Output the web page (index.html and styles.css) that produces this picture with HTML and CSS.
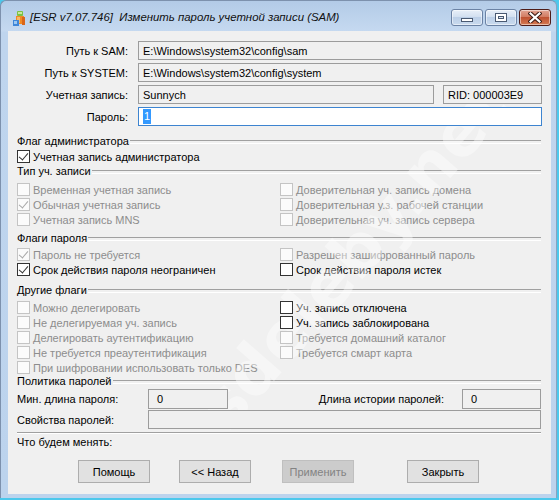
FILE: index.html
```html
<!DOCTYPE html>
<html>
<head>
<meta charset="utf-8">
<title>ESR</title>
<link rel="stylesheet" href="styles.css">
</head>
<body>
<div class="window">
  <div class="titlebar">
    <svg class="appicon" width="16" height="17" viewBox="0 0 16 17">
      <rect x="5" y="1" width="6" height="5" rx="1" fill="#7cc242"/>
      <rect x="6" y="2" width="4" height="2" fill="#c8e89a"/>
      <path d="M4 6 h8 v8 h-8 z" fill="#f08a24"/>
      <path d="M5 7 h3 v6 h-3 z" fill="#f7b866"/>
      <path d="M1 10 h6 v6 h-6 z" fill="#3f86d8"/>
      <path d="M2 11 h3 v3 h-3 z" fill="#9cc8f2"/>
      <rect x="10" y="7" width="3" height="8" fill="#d9661a"/>
    </svg>
    <span class="title">[ESR v7.07.746]&nbsp; Изменить пароль учетной записи (SAM)</span>
    <div class="controls">
      <div class="cbtn"><span class="g-min"></span></div>
      <div class="cbtn"><span class="g-max"></span></div>
      <div class="cbtn close">
        <svg width="14" height="11" viewBox="0 0 14 11">
          <path d="M2.5 1.5 L11.5 9.5 M11.5 1.5 L2.5 9.5" stroke="#3b1a14" stroke-width="4.2" stroke-linecap="square"/>
          <path d="M2.5 1.5 L11.5 9.5 M11.5 1.5 L2.5 9.5" stroke="#ffffff" stroke-width="2.2" stroke-linecap="square"/>
        </svg>
      </div>
    </div>
  </div>

  <div class="client">
    <div class="watermark">sdeleby.net</div>

    <div class="paths">
      <span class="lbl">Путь к SAM:</span>
      <div class="edit wide">E:\Windows\system32\config\sam</div>
      <span class="lbl">Путь к SYSTEM:</span>
      <div class="edit wide">E:\Windows\system32\config\system</div>
      <span class="lbl">Учетная запись:</span>
      <div class="edit">Sunnych</div>
      <div class="edit rid">RID: 000003E9</div>
      <span class="lbl">Пароль:</span>
      <div class="edit wide focus"><span class="sel">1</span></div>
    </div>

    <div class="ghead g1"><span>Флаг администратора</span></div>
    <div class="cbgrid">
      <div class="cb checked"><i></i>Учетная запись администратора</div>
    </div>

    <div class="ghead g2"><span>Тип уч. записи</span></div>
    <div class="cbgrid r2">
      <div class="cb dis"><i></i>Временная учетная запись</div>
      <div class="cb dis"><i></i>Доверительная уч. запись домена</div>
      <div class="cb dis checked"><i></i>Обычная учетная запись</div>
      <div class="cb dis"><i></i>Доверительная у.з. рабочей станции</div>
      <div class="cb dis"><i></i>Учетная запись MNS</div>
      <div class="cb dis"><i></i>Доверительная уч. запись сервера</div>
    </div>

    <div class="ghead g3"><span>Флаги пароля</span></div>
    <div class="cbgrid r3">
      <div class="cb dis checked"><i></i>Пароль не требуется</div>
      <div class="cb dis"><i></i>Разрешен зашифрованный пароль</div>
      <div class="cb checked"><i></i>Срок действия пароля неограничен</div>
      <div class="cb"><i></i>Срок действия пароля истек</div>
    </div>

    <div class="ghead g4"><span>Другие флаги</span></div>
    <div class="cbgrid r4">
      <div class="cb dis"><i></i>Можно делегировать</div>
      <div class="cb"><i></i>Уч. запись отключена</div>
      <div class="cb dis"><i></i>Не делегируемая уч. запись</div>
      <div class="cb"><i></i>Уч. запись заблокирована</div>
      <div class="cb dis"><i></i>Делегировать аутентификацию</div>
      <div class="cb dis"><i></i>Требуется домашний каталог</div>
      <div class="cb dis"><i></i>Не требуется преаутентификация</div>
      <div class="cb dis"><i></i>Требуется смарт карта</div>
      <div class="cb dis"><i></i>При шифровании использовать только DES</div>
    </div>

    <div class="ghead g5"><span>Политика паролей</span></div>
    <div class="policy">
      <span class="plbl">Мин. длина пароля:</span>
      <div class="edit">0</div>
      <span class="plbl right">Длина истории паролей:</span>
      <div class="edit">0</div>
      <span class="plbl">Свойства паролей:</span>
      <div class="edit pwide"></div>
    </div>

    <div class="sep"></div>
    <div class="change">Что будем менять:</div>

    <div class="buttons">
      <div class="btn b1">Помощь</div>
      <div class="btn b2">&lt;&lt; Назад</div>
      <div class="btn b3 disabled">Применить</div>
      <div class="btn b4">Закрыть</div>
    </div>
  </div>
</div>
</body>
</html>
```

FILE: styles.css
```css
* { box-sizing: border-box; }
html, body { margin: 0; padding: 0; }
body {
  width: 559px;
  height: 500px;
  overflow: hidden;
  background: #4cc8ec;
  font-family: "Liberation Sans", Arial, sans-serif;
  font-size: 11px;
  color: #000;
}
.window {
  width: 557px;
  height: 498px;
  background: linear-gradient(#b3cbe7 0px, #c5d9f0 30px, #bfd5ee 31px, #bcd3ed 100%);
  border-top: 1px solid #7d91ad;
  border-left: 1px solid #7d91ad;
  border-right: 1px solid #8aa2c0;
  border-radius: 6px 6px 0 0;
  display: flex;
  flex-direction: column;
}
.titlebar {
  height: 30px;
  display: flex;
  align-items: flex-start;
  padding-left: 11px;
}
.appicon { margin-top: 9px; flex: none; }
.title {
  margin-left: 2px;
  margin-top: 10px;
  font-style: italic;
  font-size: 11.4px;
  color: #101010;
  white-space: nowrap;
}
.controls {
  margin-left: auto;
  margin-right: 5px;
  margin-top: 8px;
  display: flex;
  gap: 2px;
}
.cbtn {
  width: 32px;
  height: 17px;
  border: 1px solid #6b82a4;
  border-radius: 3px;
  background: linear-gradient(#e8eff8 0%, #d3e0f0 45%, #bccfe7 50%, #c9daee 100%);
  display: flex;
  align-items: center;
  justify-content: center;
  box-shadow: inset 0 0 0 1px rgba(255,255,255,0.5);
}
.g-min {
  width: 12px;
  height: 4px;
  margin-top: 5px;
  background: #fff;
  border: 1px solid #4a5a72;
}
.g-max {
  width: 12px;
  height: 9px;
  border: 1px solid #4a5a72;
  background: #fff;
  box-shadow: inset 0 0 0 2px #fff;
  position: relative;
}
.g-max::after {
  content: "";
  position: absolute;
  left: 2px; top: 2px; right: 2px; bottom: 2px;
  border: 1px solid #4a5a72;
  background: #dfe8f3;
}
.cbtn.close {
  border-color: #4e1c18;
  background: linear-gradient(#e2a594 0%, #d27d63 45%, #bf5232 50%, #d47a52 100%);
}

.client {
  position: relative;
  margin-left: 7px;
  width: 543px;
  height: 463px;
  background: #f0f0f0;
  padding: 10px 10px 0 9px;
  overflow: hidden;
}
.watermark {
  position: absolute;
  left: 345px;
  top: 225px;
  font-size: 66px;
  font-weight: bold;
  font-family: "DejaVu Sans", sans-serif;
  color: rgba(255,255,255,0.4);
  transform: translate(-50%, -50%) rotate(-49deg);
  white-space: nowrap;
  pointer-events: none;
}

.edit {
  position: relative;
  border: 1px solid #9c9c9c;
  background: #f0f0f0;
  padding-left: 4px;
  display: flex;
  align-items: center;
  white-space: nowrap;
}
.paths {
  margin-left: -9px;
  display: grid;
  grid-template-columns: 130px 296px 9px 99px;
  grid-auto-rows: 19px;
  row-gap: 3px;
}
.paths .lbl {
  text-align: right;
  padding-right: 10px;
  align-self: center;
  white-space: nowrap;
}
.paths .wide { grid-column: 2 / 5; }
.paths .rid { grid-column: 4; }
.edit.focus {
  background: #fff;
  border-color: #3d84d0;
}
.sel {
  background: #3399ff;
  color: #fff;
  padding: 1px 1px;
  line-height: 13px;
}

.ghead {
  display: flex;
  align-items: center;
  height: 13px;
  line-height: 13px;
  white-space: nowrap;
}
.ghead::after {
  content: "";
  flex: 1;
  height: 2px;
  border-top: 1px solid #a0a0a0;
  border-bottom: 1px solid #ffffff;
  margin-left: 1px;
}
.g1 { margin-top: 9px; }
.g2 { margin-top: 1px; }
.g3 { margin-top: 5px; }
.g4 { margin-top: 7px; }
.g5 { margin-top: 0; }

.cbgrid {
  display: grid;
  grid-template-columns: 263px 1fr;
  grid-auto-rows: 15px;
  margin-top: 1px;
}
.cbgrid.r2 { margin-top: 4px; }
.cbgrid.r3 { margin-top: 2px; }
.cbgrid.r4 { margin-top: 3px; }
.cb {
  display: flex;
  align-items: center;
  white-space: nowrap;
  height: 15px;
}
.cb i {
  flex: none;
  width: 13px;
  height: 13px;
  border: 1px solid #333333;
  background: #fff;
  margin-right: 3px;
  position: relative;
}
.cb.checked i::after {
  content: "";
  position: absolute;
  left: 3px;
  top: 0px;
  width: 4px;
  height: 8px;
  border-right: 1.6px solid #333;
  border-bottom: 1.6px solid #333;
  transform: rotate(40deg);
}
.cb.dis { color: #8d8d8d; }
.cb.dis i { border-color: #c4c4c4; background: #fbfbfb; }
.cb.dis.checked i::after { border-color: #a8a8a8; }

.policy {
  display: grid;
  grid-template-columns: 131px 80px 1fr 79px;
  grid-template-rows: 20px 19px;
  row-gap: 1px;
  margin-top: 1px;
}
.plbl { align-self: center; white-space: nowrap; }
.plbl.right { text-align: right; padding-right: 18px; }
.policy .edit { padding-left: 8px; }
.pwide { grid-column: 2 / 5; }

.sep {
  margin-top: 3px;
  height: 2px;
  border-top: 1px solid #a0a0a0;
  border-bottom: 1px solid #fff;
}
.change {
  margin-top: 2px;
  height: 13px;
  line-height: 13px;
}
.buttons {
  display: flex;
  margin-top: 11px;
}
.btn {
  width: 72px;
  height: 23px;
  border: 1px solid #adadad;
  background: #e1e1e1;
  display: flex;
  align-items: center;
  justify-content: center;
}
.btn.disabled {
  background: #cccccc;
  border-color: #bfbfbf;
  color: #838383;
}
.b1 { margin-left: 61px; }
.b2 { margin-left: 29px; }
.b3 { margin-left: 31px; }
.b4 { margin-left: 53px; }
```
